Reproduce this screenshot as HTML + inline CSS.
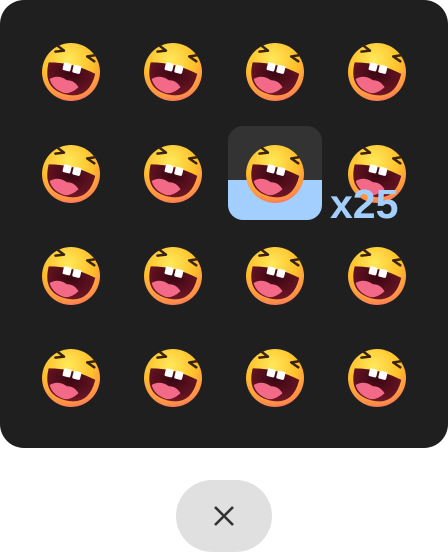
<!DOCTYPE html>
<html><head><meta charset="utf-8"><style>
html,body{margin:0;padding:0;background:#fff;width:448px;height:552px;overflow:hidden;font-family:"Liberation Sans",sans-serif}
.panel{position:absolute;left:0;top:0;width:448px;height:448px;background:#1f1f1f;border-radius:24px}
.hl{position:absolute;left:228px;top:126px;width:94px;height:94px;border-radius:15px;overflow:hidden;background:#333}
.hl div{position:absolute;left:0;right:0;top:54px;bottom:0;background:#a3cfff}
.e{position:absolute;width:66px;height:66px}
.cnt{position:absolute;left:330px;top:181px;font-size:41px;font-weight:bold;color:#a3cfff}
.btn{position:absolute;left:176px;top:480px;width:96px;height:72px;border-radius:36px;background:#e0e0e0}
</style></head><body>
<svg width="0" height="0" style="position:absolute">
<defs>
<radialGradient id="fg" cx="0.4" cy="0.3" r="0.8">
<stop offset="0" stop-color="#ffe95a"/><stop offset="0.55" stop-color="#ffc02a"/><stop offset="0.85" stop-color="#ff8a4a"/><stop offset="1" stop-color="#f0508a"/>
</radialGradient>
<radialGradient id="mg" cx="0.5" cy="0.3" r="0.8"><stop offset="0" stop-color="#3a0612"/><stop offset="1" stop-color="#7a1a2a"/></radialGradient>
<symbol id="emo" viewBox="0 0 66 66">
<g transform="rotate(14 33 34)">
<circle cx="33" cy="34" r="29" fill="url(#fg)"/>
<path d="M9 30 Q33 24 57 30 Q57 57 33 57 Q9 57 9 30Z" fill="url(#mg)"/>
<path d="M14 46 Q21 39 31 43 Q38 41 44 47 Q38 56 31 56 Q19 55 14 46Z" fill="#f26a88"/>
<rect x="24" y="26" width="8" height="8" rx="1.5" fill="#fff"/>
<rect x="34" y="26" width="8" height="8" rx="1.5" fill="#fff"/>
<path d="M13 18 L21 15 M14 12 L21 15" stroke="#3a2410" stroke-width="2.5" stroke-linecap="round" fill="none"/>
<path d="M53 18 L45 15 M52 12 L45 15" stroke="#3a2410" stroke-width="2.5" stroke-linecap="round" fill="none"/>
</g>
</symbol>
</defs></svg>
<div class="panel"></div>
<div class="hl"><div></div></div>
<svg class="e" style="left:38px;top:38px"><use href="#emo"/></svg>
<svg class="e" style="left:140px;top:38px"><use href="#emo"/></svg>
<svg class="e" style="left:242px;top:38px"><use href="#emo"/></svg>
<svg class="e" style="left:344px;top:38px"><use href="#emo"/></svg>
<svg class="e" style="left:38px;top:140px"><use href="#emo"/></svg>
<svg class="e" style="left:140px;top:140px"><use href="#emo"/></svg>
<svg class="e" style="left:242px;top:140px"><use href="#emo"/></svg>
<svg class="e" style="left:344px;top:140px"><use href="#emo"/></svg>
<svg class="e" style="left:38px;top:242px"><use href="#emo"/></svg>
<svg class="e" style="left:140px;top:242px"><use href="#emo"/></svg>
<svg class="e" style="left:242px;top:242px"><use href="#emo"/></svg>
<svg class="e" style="left:344px;top:242px"><use href="#emo"/></svg>
<svg class="e" style="left:38px;top:344px"><use href="#emo"/></svg>
<svg class="e" style="left:140px;top:344px"><use href="#emo"/></svg>
<svg class="e" style="left:242px;top:344px"><use href="#emo"/></svg>
<svg class="e" style="left:344px;top:344px"><use href="#emo"/></svg>
<div class="cnt">x25</div>
<div class="btn"><svg width="96" height="72"><path d="M39 27 L57 45 M57 27 L39 45" stroke="#333" stroke-width="2.6" fill="none"/></svg></div>
</body></html>
